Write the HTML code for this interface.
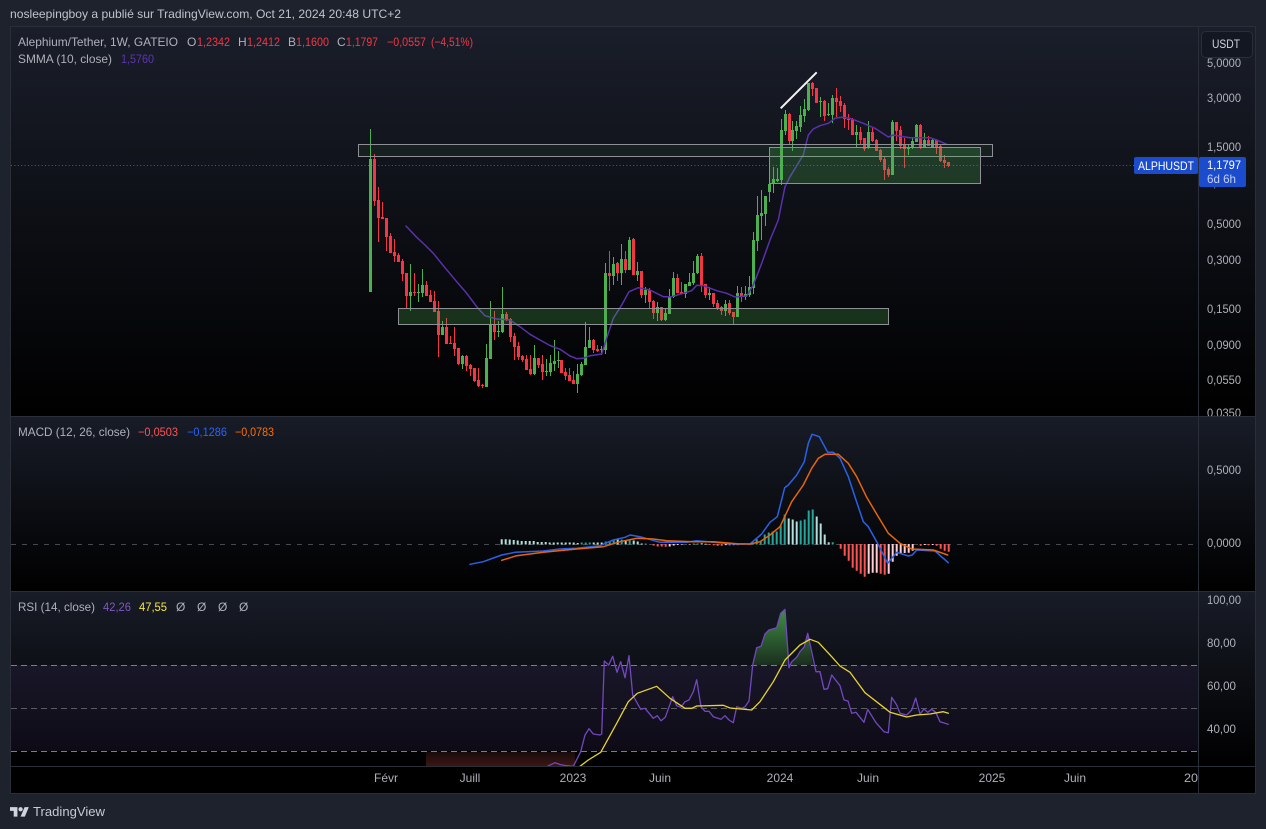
<!DOCTYPE html>
<html lang="fr">
<head>
<meta charset="utf-8">
<title>ALPHUSDT</title>
<style>
html,body{margin:0;padding:0;background:#1e222d;width:1266px;height:829px;overflow:hidden}
svg{display:block}
text{font-family:"Liberation Sans",sans-serif;font-size:12px;fill:#aeb1ba}
.r{fill:#f23645}
polyline{stroke-linejoin:round;stroke-linecap:round}
</style>
</head>
<body>
<svg width="1266" height="829" viewBox="0 0 1266 829" xmlns="http://www.w3.org/2000/svg">
<defs>
<linearGradient id="p1" gradientUnits="userSpaceOnUse" x1="0" y1="27" x2="0" y2="416"><stop offset="0" stop-color="#1a1e2a"/><stop offset="1" stop-color="#000"/></linearGradient>
<linearGradient id="p2" gradientUnits="userSpaceOnUse" x1="0" y1="417" x2="0" y2="591"><stop offset="0" stop-color="#181c27"/><stop offset="1" stop-color="#000"/></linearGradient>
<linearGradient id="p3" gradientUnits="userSpaceOnUse" x1="0" y1="592" x2="0" y2="766"><stop offset="0" stop-color="#181c27"/><stop offset="1" stop-color="#000"/></linearGradient>
<linearGradient id="gf" gradientUnits="userSpaceOnUse" x1="0" y1="609" x2="0" y2="666"><stop offset="0" stop-color="#3f9143"/><stop offset="1" stop-color="#1a2c1e"/></linearGradient>
<linearGradient id="rf" gradientUnits="userSpaceOnUse" x1="0" y1="752" x2="0" y2="766"><stop offset="0" stop-color="#190b0c"/><stop offset="1" stop-color="#3c1613"/></linearGradient>
<clipPath id="c3"><rect x="11" y="592" width="1187" height="174"/></clipPath>
<clipPath id="ct"><rect x="11" y="767" width="1187" height="27"/></clipPath>
</defs>

<rect width="1266" height="829" fill="#1e222d"/>
<text x="10" y="18" textLength="391" lengthAdjust="spacingAndGlyphs" style="fill:#c0c3cb">nosleepingboy a publié sur TradingView.com, Oct 21, 2024 20:48 UTC+2</text>

<!-- main pane -->
<rect x="10.5" y="26.5" width="1245" height="767" fill="#000" stroke="#2a2e39"/>
<rect x="11" y="27" width="1244" height="389" fill="url(#p1)"/>

<path d="M11 165.5H1134" stroke="#2c5cdc" stroke-dasharray="1 2.4" fill="none"/>

<!-- wicks green -->
<path fill="none" stroke="#4caf50" stroke-width="1" d="M370.5 129V292M410.5 264V311M418.5 284V302M422.5 269V297M442.5 321V335M462.5 355V369M486.5 344V387M490.5 301V359M498.5 321V337M502.5 287V333M534.5 345V375M546.5 359V376M550.5 355V376M554.5 340V371M558.5 351V368M577.5 364V393M581.5 362V376M585.5 322V365M589.5 327V348M601.5 346V355M605.5 263V354M613.5 257V285M621.5 244V285M629.5 237V270M637.5 262V281M645.5 287V303M657.5 302V321M665.5 308V321M669.5 289V314M673.5 272V298M685.5 284V298M689.5 273V286M693.5 261V285M697.5 254V274M709.5 287V300M725.5 300V316M737.5 286V317M745.5 286V300M749.5 276V297M753.5 232V294M757.5 196V251M761.5 190V240M765.5 196V226M769.5 184V202M773.5 167V193M777.5 168V182M781.5 119V185M785.5 110V135M792.5 121V151M796.5 121V139M800.5 106V132M804.5 99V122M808.5 83V111M820.5 97V117M828.5 103V116M832.5 95V123M856.5 125V147M868.5 121V149M892.5 120V175M908.5 144V155M912.5 137V149M916.5 124V142M924.5 133V148M932.5 138V148"/>
<!-- bodies green -->
<path fill="none" stroke="#4caf50" stroke-width="3" d="M370.5 159V292M410.5 292V296M418.5 292V293M422.5 285V293M442.5 327V335M462.5 356V364M486.5 358V387M490.5 325V359M498.5 331V332M502.5 314V332M534.5 358V374M546.5 371V372M550.5 363V372M554.5 361V364M558.5 360V361M577.5 374V384M581.5 364V375M585.5 347V365M589.5 340V348M601.5 349V350M605.5 273V350M613.5 264V276M621.5 259V273M629.5 240V270M637.5 271V275M645.5 290V295M657.5 307V313M665.5 313V320M669.5 296V314M673.5 278V297M685.5 284V294M689.5 282V286M693.5 273V283M697.5 256V273M709.5 293V295M725.5 304V311M737.5 293V317M745.5 294V297M749.5 287V295M753.5 240V288M757.5 215V241M761.5 213V216M765.5 196V214M769.5 184V192M773.5 179V184M777.5 179V181M781.5 130V180M785.5 114V131M792.5 130V141M796.5 126V131M800.5 115V127M804.5 109V116M808.5 83V110M820.5 101V102M828.5 114V115M832.5 98V115M856.5 132V135M868.5 132V148M892.5 122V175M908.5 148V149M912.5 141V148M916.5 125V142M924.5 140V147M932.5 140V147"/>
<!-- wicks red -->
<path fill="none" stroke="#f23645" stroke-width="1" d="M374.5 154V206M378.5 187V242M382.5 202V219M386.5 218V251M390.5 233V253M394.5 239V262M398.5 253V262M402.5 259V281M406.5 273V308M414.5 273V296M426.5 281V296M430.5 290V302M434.5 291V312M438.5 301V357M446.5 318V344M450.5 336V344M454.5 327V356M458.5 348V365M466.5 355V371M470.5 364V376M474.5 368V382M478.5 368V387M482.5 384V388M494.5 311V340M506.5 312V321M510.5 318V342M514.5 333V360M518.5 342V360M522.5 355V362M526.5 355V370M530.5 355V375M538.5 358V368M542.5 355V380M561.5 360V373M565.5 368V380M569.5 368V381M573.5 371V384M593.5 339V353M597.5 345V352M609.5 251V291M617.5 262V281M625.5 251V273M633.5 238V275M641.5 271V298M649.5 288V308M653.5 300V319M661.5 307V321M677.5 274V293M681.5 282V294M701.5 253V292M705.5 284V298M713.5 293V307M717.5 300V310M721.5 306V315M729.5 300V315M733.5 312V324M741.5 287V302M789.5 113V145M812.5 82V96M816.5 88V103M824.5 100V121M836.5 88V117M840.5 96V112M844.5 103V128M848.5 114V130M852.5 118V135M860.5 127V145M864.5 138V151M872.5 128V142M876.5 139V151M880.5 149V162M884.5 156V180M888.5 167V177M896.5 122V141M900.5 126V149M904.5 138V168M920.5 124V149M928.5 136V146M936.5 140V154M940.5 145V162M944.5 155V168M948.5 162V167"/>
<!-- bodies red -->
<path fill="none" stroke="#f23645" stroke-width="3" d="M374.5 159V201M378.5 200V218M382.5 217V219M386.5 218V237M390.5 236V253M394.5 252V256M398.5 255V262M402.5 261V274M406.5 273V296M414.5 292V293M426.5 285V296M430.5 295V302M434.5 301V312M438.5 311V335M446.5 327V344M450.5 343V344M454.5 343V349M458.5 348V364M466.5 356V366M470.5 365V369M474.5 368V381M478.5 380V386M482.5 385V386M494.5 324V332M506.5 314V320M510.5 319V337M514.5 336V347M518.5 346V357M522.5 356V360M526.5 359V370M530.5 369V374M538.5 358V365M542.5 364V372M561.5 360V373M565.5 372V376M569.5 375V381M573.5 380V384M593.5 340V350M597.5 349V351M609.5 273V276M617.5 263V273M625.5 259V270M633.5 239V275M641.5 271V295M649.5 290V302M653.5 301V313M661.5 307V320M677.5 278V293M681.5 292V294M701.5 256V285M705.5 284V295M713.5 293V304M717.5 303V308M721.5 307V311M729.5 303V313M733.5 312V317M741.5 293V297M789.5 114V141M812.5 83V89M816.5 88V103M824.5 101V116M836.5 98V102M840.5 101V106M844.5 105V119M848.5 119V120M852.5 119V135M860.5 132V140M864.5 138V149M872.5 132V141M876.5 140V151M880.5 150V160M884.5 159V170M888.5 169V175M896.5 122V131M900.5 130V146M904.5 144V149M920.5 125V148M928.5 140V146M936.5 140V148M940.5 146V161M944.5 160V163M948.5 162V166"/>

<!-- SMMA -->
<polyline fill="none" stroke="#5a30ad" stroke-width="1.5" points="406,226 416.7,237.3 425,245 433.3,253.3 443.3,265.7 456.7,281.7 466.7,293.3 476.7,306.7 485,315.7 496.7,319 510,320 520,326.7 530,334.3 540,340 550,345.5 560,349.3 570,356 576.7,358.7 583.3,358.3 590,355.7 601.7,354 608.3,333.3 613.3,318.3 621.7,305 629,291.7 638.3,287.7 650,290 663.3,296.7 671.7,296.7 683.3,293.3 691.7,290.7 696.7,285.3 703.3,285.7 716.7,290.7 726.7,293.3 735,297 746.7,296 753.3,285 761.7,263.3 770,240 778.3,220 782.3,200 785,186.7 790,176.7 803.3,155 808.3,135 813.3,129 820,125.7 828.3,123.3 835,118.3 841.7,117.3 850,118.3 863.3,123.3 875,128.3 888.3,137 893.3,135 910,137.7 930,137.7 936.7,140 946.7,144.3"/>

<!-- drawings -->
<rect x="358.5" y="144.5" width="634" height="12" fill="rgba(76,175,80,.08)" stroke="#8e9095" stroke-width="1"/>
<rect x="769.5" y="147.5" width="211" height="36" fill="rgba(76,175,80,.25)" stroke="#8e9095" stroke-width="1"/>
<rect x="398.5" y="308.5" width="490" height="16" fill="rgba(76,175,80,.25)" stroke="#8e9095" stroke-width="1"/>
<path d="M780.7 108.3L816.7 72.3" stroke="#f4f4f4" stroke-width="2" fill="none"/>

<!-- legend -->
<text x="18" y="46" textLength="160" lengthAdjust="spacingAndGlyphs">Alephium/Tether, 1W, GATEIO</text>
<text x="187" y="46">O</text><text x="197" y="46" textLength="33" lengthAdjust="spacingAndGlyphs" class="r">1,2342</text>
<text x="238" y="46">H</text><text x="247" y="46" textLength="33" lengthAdjust="spacingAndGlyphs" class="r">1,2412</text>
<text x="288" y="46">B</text><text x="296" y="46" textLength="33" lengthAdjust="spacingAndGlyphs" class="r">1,1600</text>
<text x="337" y="46">C</text><text x="346" y="46" textLength="32" lengthAdjust="spacingAndGlyphs" class="r">1,1797</text>
<text x="387" y="46" textLength="39" lengthAdjust="spacingAndGlyphs" class="r">−0,0557</text>
<text x="431" y="46" textLength="42" lengthAdjust="spacingAndGlyphs" class="r">(−4,51%)</text>
<text x="18" y="63" textLength="94" lengthAdjust="spacingAndGlyphs">SMMA (10, close)</text>
<text x="121" y="63" textLength="33" lengthAdjust="spacingAndGlyphs" style="fill:#5e35b1">1,5760</text>

<!-- price axis -->
<text x="1207" y="67" textLength="34" lengthAdjust="spacingAndGlyphs">5,0000</text>
<text x="1207" y="102" textLength="34" lengthAdjust="spacingAndGlyphs">3,0000</text>
<text x="1207" y="151" textLength="34" lengthAdjust="spacingAndGlyphs">1,5000</text>
<text x="1207" y="187" textLength="34" lengthAdjust="spacingAndGlyphs">1,0000</text>
<text x="1207" y="228" textLength="34" lengthAdjust="spacingAndGlyphs">0,5000</text>
<text x="1207" y="264" textLength="34" lengthAdjust="spacingAndGlyphs">0,3000</text>
<text x="1207" y="313" textLength="34" lengthAdjust="spacingAndGlyphs">0,1500</text>
<text x="1207" y="349" textLength="34" lengthAdjust="spacingAndGlyphs">0,0900</text>
<text x="1207" y="384" textLength="34" lengthAdjust="spacingAndGlyphs">0,0550</text>
<text x="1207" y="417" textLength="34" lengthAdjust="spacingAndGlyphs">0,0350</text>
<rect x="1201.5" y="31.5" width="51" height="26" rx="4" fill="#131722" stroke="#2a2e39"/>
<text x="1212" y="48" textLength="28" lengthAdjust="spacingAndGlyphs" style="fill:#d1d4dc">USDT</text>
<rect x="1134" y="157" width="64" height="17" rx="2" fill="#1b4ccd"/>
<text x="1138" y="170" textLength="56" lengthAdjust="spacingAndGlyphs" style="fill:#fff">ALPHUSDT</text>
<rect x="1199" y="157" width="47" height="30" rx="2" fill="#1b4ccd"/>
<text x="1207" y="169" textLength="34" lengthAdjust="spacingAndGlyphs" style="fill:#fff">1,1797</text>
<text x="1207" y="183" textLength="29" lengthAdjust="spacingAndGlyphs" style="fill:#c3d0f3">6d 6h</text>

<!-- MACD pane -->
<rect x="11" y="416" width="1244" height="175" fill="url(#p2)"/>
<path d="M11 544.5H1198" stroke="#47494f" stroke-dasharray="5 6" fill="none"/>
<g fill="none" stroke-width="2">
<path stroke="#b2dfdb" d="M501.7 544.5v-5.3M505.7 544.5v-5.3M509.7 544.5v-5M513.7 544.5v-4.5M517.7 544.5v-4M521.7 544.5v-3.5M525.7 544.5v-3.5M529.7 544.5v-3.5M533.7 544.5v-3.5M537.7 544.5v-2.5M541.7 544.5v-2.5M545.7 544.5v-2.5M549.7 544.5v-2M553.7 544.5v-2M557.7 544.5v-2M561.7 544.5v-2M565.7 544.5v-2M569.7 544.5v-2M573.7 544.5v-2M577.7 544.5v-1.5M593.7 544.5v-2M597.7 544.5v-2M601.7 544.5v-2M617.7 544.5v-5M625.7 544.5v-4M633.7 544.5v-4M637.7 544.5v-3M641.7 544.5v-1M645.7 544.5v-.7M701.7 544.5v-1.3M705.7 544.5v-.7M788.7 544.5v-26M792.7 544.5v-25M796.7 544.5v-23M816.7 544.5v-28M820.7 544.5v-21M824.7 544.5v-10M828.7 544.5v-2.3"/>
<path stroke="#26a69a" d="M581.7 544.5v-2M585.7 544.5v-2M589.7 544.5v-2M605.7 544.5v-3M609.7 544.5v-3.5M613.7 544.5v-4M621.7 544.5v-5M629.7 544.5v-4.5M693.7 544.5v-1M697.7 544.5v-1M753.2 544.5v-2M756.7 544.5v-5.3M760.7 544.5v-3.3M764.7 544.5v-10M768.7 544.5v-12M772.7 544.5v-13M776.7 544.5v-13M780.7 544.5v-19M784.7 544.5v-30M800.7 544.5v-24M804.7 544.5v-25M808.7 544.5v-34M812.7 544.5v-35M832.7 544.5v-2.3"/>
<path stroke="#ff5252" d="M653.7 544v1.5M657.7 544v2.5M661.7 544v2.5M665.7 544v2.7M709.7 544v.9M713.7 544v1.2M717.7 544v1.7M721.7 544v1.7M729.7 544v1.4M840.7 544v4.7M844.7 544v11.7M848.7 544v16.7M852.7 544v23.7M856.7 544v26.7M860.7 544v29.7M864.7 544v32.7M880.7 544v29.7M884.7 544v30.7M920.7 544v1.7M928.7 544v1.3M936.7 544v1.7M940.7 544v4.7M944.7 544v6.7M948.7 544v7.7"/>
<path stroke="#ffcdd2" d="M669.7 544v2.5M673.7 544v1.5M677.7 544v1M681.7 544v.6M689.7 544v.6M725.7 544v1.1M733.7 544v1.1M737.7 544v1.1M868.7 544v29.7M872.7 544v28.7M876.7 544v28.7M888.7 544v29.7M892.7 544v17.7M896.7 544v11.7M900.7 544v9.7M904.7 544v9M908.7 544v8.7M912.7 544v6.7M924.7 544v1M932.7 544v1"/>
</g>
<polyline fill="none" stroke="#2962e6" stroke-width="1.5" points="470,564.3 483.3,561.7 501.7,555 515,552.3 543.3,551 560,549 576.7,548.3 600,545.7 613.3,540 625,537.3 630,535 640,536.7 660,542.3 686.7,542.3 696.7,540.7 713.3,542.3 736.7,544.3 750,544 761.7,534 770,522.3 777.3,516.7 784.7,487.7 788.3,485 796.7,475 804.3,461.7 808.3,443.3 812,434.3 819.3,436.7 827.7,452.3 833.3,452.3 840,458.3 848.3,476.7 856,500 863.3,521.7 868.3,526.7 876.7,541.7 887.7,563.3 896.7,552.3 908.3,556 912.3,555 916.7,550 935,551 948.3,562.7"/>
<polyline fill="none" stroke="#e8640c" stroke-width="1.5" points="501.7,560.3 516.7,555.7 543.3,552.3 576.7,549 603.3,546.7 620,541.7 636.7,538.3 653.3,539 666.7,540.7 693.3,541.7 713.3,541.7 736.7,543.7 750,544 760,541.7 770,535 780,526.7 791.7,501.7 803.3,485 811.7,468.3 818.3,458.3 825,454.3 838.3,454.3 848.3,463.3 856.7,476.7 866.7,497.3 878.3,516.7 888.3,533.3 900,543.3 911.7,549 933.3,550 947.7,555"/>

<text x="18" y="436" textLength="112" lengthAdjust="spacingAndGlyphs">MACD (12, 26, close)</text>
<text x="138" y="436" textLength="40" lengthAdjust="spacingAndGlyphs" style="fill:#ff5252">−0,0503</text>
<text x="187" y="436" textLength="40" lengthAdjust="spacingAndGlyphs" style="fill:#2962ff">−0,1286</text>
<text x="235" y="436" textLength="39" lengthAdjust="spacingAndGlyphs" style="fill:#ff6d00">−0,0783</text>
<text x="1207" y="474" textLength="34" lengthAdjust="spacingAndGlyphs">0,5000</text>
<text x="1207" y="547" textLength="34" lengthAdjust="spacingAndGlyphs">0,0000</text>

<!-- RSI pane -->
<rect x="11" y="591" width="1244" height="175" fill="url(#p3)"/>
<rect x="11" y="665" width="1187" height="86" fill="rgba(126,87,194,.1)"/>
<path d="M11 665.5H1198M11 751.5H1198" stroke="#7b7d85" stroke-dasharray="6 4" fill="none"/>
<path d="M11 708.5H1198" stroke="#5a5b63" stroke-dasharray="6 4" fill="none"/>
<rect x="426" y="752" width="149" height="14" fill="url(#rf)"/>
<path fill="url(#gf)" d="M752.7 665L756.7 647.7 761 646.3 765 634 769 630 776.7 627.7 780.7 613.3 785 609.3 788.6 665zM789.3 665L791.7 661.7 796.7 657.3 800 651.7 804.3 646.7 807.7 633.3 813 665z"/>
<g clip-path="url(#c3)">
<polyline fill="none" stroke="#7248c0" stroke-width="1.3" points="548,766 555,762.7 560,764.5 565,765.5 573.3,766.3 580.7,751.7 585,735 589,728.7 593.3,734 600,735 601.7,734 604.3,661 608.7,665 612.7,656.3 617,672.3 620.7,661.7 625,677.7 629,655.7 632.7,695 640.7,709.3 645,708.3 653.3,718.3 657.3,715.7 661,720.7 665.3,717.3 672.7,696.7 676.7,705.7 680.7,707.3 685,701.7 689,700 693.3,691.7 696.7,679.7 701,706.7 705,711.3 709,711.3 713.3,716.7 721,719.3 725,715.7 729,720 733.3,722.7 736.7,706.7 741.7,708.3 745,706.7 749,701 752.7,665 756.7,647.7 761,646.3 765,634 769,630 776.7,627.7 780.7,613.3 785,609.3 789,667.7 791.7,661.7 796.7,657.3 800,651.7 804.3,646.7 807.7,633.3 816,671.7 820,671.7 824,689.3 827.7,688.7 831.7,675 840,685.7 844,700 848,701 851.7,713.3 856,712.3 864,722.3 867.7,709.3 876,722.7 884,731.7 888.3,732.7 891.7,697.3 896.7,705 900,713.3 906.7,715 911.7,710 915.7,698 920,714 924,709 927.7,712.3 931.7,709.3 935.7,712.3 940,721.7 948.3,724.3"/>
<polyline fill="none" stroke="#e8d52a" stroke-width="1.3" points="580,766.3 588.3,760 600.7,752.3 616.7,723.3 628.3,701.7 637.3,693.3 656.7,686.3 670,698.3 685,708.3 691.7,708.3 696.7,706 723.3,705.3 730,708 751.7,710 760,701.7 773.3,681.7 785,660 800,645 810,639.3 818.3,642.3 831.7,656.7 840,666 850,672.3 865,692.7 885,708.3 890,712.3 906.7,717 916.7,715 930,714 943.3,711.7 948.3,713.3"/>
</g>
<text x="18" y="611" textLength="77" lengthAdjust="spacingAndGlyphs">RSI (14, close)</text>
<text x="103" y="611" textLength="28" lengthAdjust="spacingAndGlyphs" style="fill:#7e57c2">42,26</text>
<text x="139" y="611" textLength="28" lengthAdjust="spacingAndGlyphs" style="fill:#f5e642">47,55</text>
<text x="176" y="611">Ø</text><text x="197" y="611">Ø</text><text x="218" y="611">Ø</text><text x="239" y="611">Ø</text>
<text x="1207" y="604" textLength="34" lengthAdjust="spacingAndGlyphs">100,00</text>
<text x="1207" y="647" textLength="29" lengthAdjust="spacingAndGlyphs">80,00</text>
<text x="1207" y="690" textLength="29" lengthAdjust="spacingAndGlyphs">60,00</text>
<text x="1207" y="733" textLength="29" lengthAdjust="spacingAndGlyphs">40,00</text>

<!-- separators -->
<path d="M11 416.5H1255M11 591.5H1255M11 766.5H1255" stroke="#2a2e39" fill="none"/>
<path d="M1198.5 27V794" stroke="#2a2e39" fill="none"/>

<!-- time axis -->
<g text-anchor="middle">
<text x="386" y="782">Févr</text>
<text x="470" y="782">Juill</text>
<text x="573" y="782">2023</text>
<text x="660" y="782">Juin</text>
<text x="780" y="782">2024</text>
<text x="868" y="782">Juin</text>
<text x="992" y="782">2025</text>
<text x="1075" y="782">Juin</text>
</g>
<text x="1184" y="782" textLength="14" lengthAdjust="spacingAndGlyphs" clip-path="url(#ct)">20</text>

<!-- footer logo -->
<g transform="translate(10 805) scale(.53)" fill="#d1d4dc"><path d="M14 22H7V11H0V4h14v18zM28 22h-8l7.5-18h8L28 22z"/><circle cx="20" cy="8" r="4"/></g>
<text x="33" y="816" textLength="72" lengthAdjust="spacingAndGlyphs" style="font-size:13px;fill:#c8cad2">TradingView</text>
</svg>
</body>
</html>
